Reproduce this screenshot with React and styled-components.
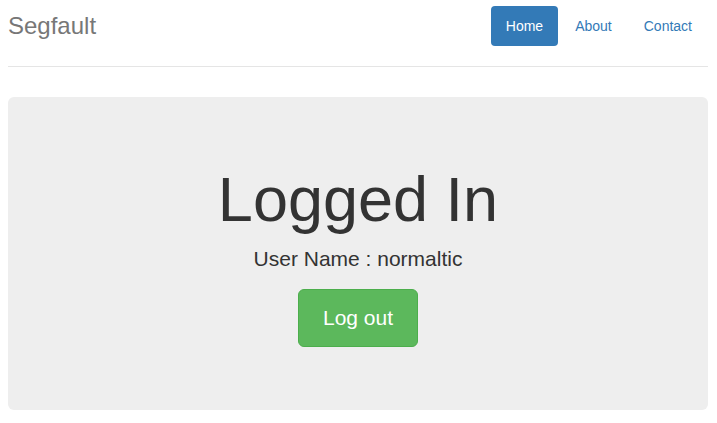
import React from "react";
import styled, { createGlobalStyle } from "styled-components";

const GlobalStyle = createGlobalStyle`
  html, body {
    margin: 0;
    padding: 0;
    background: #fff;
  }
  body {
    font-family: "Liberation Sans", Arial, Helvetica, sans-serif;
    font-size: 14px;
    line-height: 1.42857143;
    color: #333;
  }
  * {
    box-sizing: border-box;
  }
`;

const Page = styled.div`
  padding: 6px 9px 0 8px;
`;

const Header = styled.header`
  display: flex;
  align-items: flex-start;
  justify-content: space-between;
  padding-bottom: 20px;
  border-bottom: 1px solid #e5e5e5;
  margin-bottom: 30px;
`;

const Brand = styled.h3`
  margin: 0;
  font-size: 24px;
  font-weight: 500;
  line-height: 40px;
  color: #777;
`;

const Nav = styled.ul`
  display: flex;
  list-style: none;
  margin: 0 1px 0 0;
  padding: 0;
  gap: 2px;
`;

const Pill = styled.a`
  display: block;
  padding: 10px 15px;
  line-height: 20px;
  font-size: 14px;
  border-radius: 4px;
  text-decoration: none;
  color: ${(p) => (p.$active ? "#fff" : "#337ab7")};
  background: ${(p) => (p.$active ? "#337ab7" : "transparent")};
  cursor: pointer;
`;

const Jumbotron = styled.section`
  background: #eee;
  border-radius: 6px;
  padding: 48px 60px;
  text-align: center;
`;

const Title = styled.h1`
  margin: 20px 0 10px;
  font-size: 63px;
  font-weight: 500;
  line-height: 1.1;
  color: #333;
`;

const Lead = styled.p`
  margin: 0 0 15px;
  font-size: 21px;
  font-weight: 200;
  line-height: 1.42857143;
`;

const ButtonRow = styled.div`
  display: flex;
  justify-content: center;
  margin-bottom: 15px;
`;

const LogoutButton = styled.a`
  display: inline-block;
  padding: 14px 24px;
  font-size: 21px;
  line-height: 1.3333333;
  color: #fff;
  background: #5cb85c;
  border: 1px solid #4cae4c;
  border-radius: 6px;
  text-decoration: none;
  cursor: pointer;
`;

export default function App() {
  return (
    <>
      <GlobalStyle />
      <Page>
        <Header>
          <Brand>Segfault</Brand>
          <Nav>
            <li>
              <Pill $active>Home</Pill>
            </li>
            <li>
              <Pill>About</Pill>
            </li>
            <li>
              <Pill>Contact</Pill>
            </li>
          </Nav>
        </Header>
        <Jumbotron>
          <Title>Logged In</Title>
          <Lead>User Name : normaltic</Lead>
          <ButtonRow>
            <LogoutButton>Log out</LogoutButton>
          </ButtonRow>
        </Jumbotron>
      </Page>
    </>
  );
}
